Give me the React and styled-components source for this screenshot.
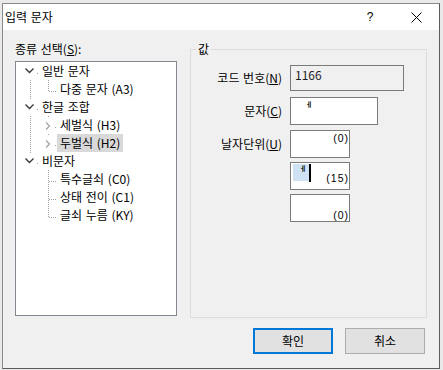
import React from 'react';
import styled, { createGlobalStyle } from 'styled-components';

const Global = createGlobalStyle`
  html, body { margin: 0; padding: 0; background: #e9e9e9; }
  body {
    font-family: "Noto Sans CJK KR", "Noto Sans", sans-serif;
    font-size: 12px;
    color: #000;
    word-spacing: 1px;
  }
  * { box-sizing: border-box; }
`;

const Frame = styled.div`
  margin: 3px 0 0 2px;
  width: 438px;
  border: 1px solid #8a8a8a;
  border-right-color: #5c5c5c;
  border-bottom-color: #5c5c5c;
  background: #f0f0f0;
`;

const TitleBar = styled.div`
  height: 26px;
  background: #fff;
  display: flex;
  align-items: center;
  padding-left: 2px;
`;

const Title = styled.div`
  flex: 1;
  font-size: 12px;
  line-height: 16px;
`;

const CaptionButton = styled.div`
  width: 46px;
  height: 26px;
  display: flex;
  align-items: center;
  justify-content: center;
  font-size: 12px;
  font-family: "Liberation Sans", sans-serif;
`;

const Content = styled.div`
  padding: 11px 12px 14px 12px;
  display: flex;
  flex-direction: column;
`;

const Main = styled.div`
  display: flex;
  gap: 13px;
  align-items: flex-start;
`;

const LeftCol = styled.div`
  width: 162px;
  display: flex;
  flex-direction: column;
`;

const SectionLabel = styled.div`
  line-height: 16px;
  height: 16px;
  margin-bottom: 4px;
  white-space: nowrap;
`;

const Tree = styled.div`
  height: 255px;
  border: 1px solid #828790;
  background: #fff;
  display: flex;
  flex-direction: column;
`;

const TreeRow = styled.div`
  display: flex;
  height: 18px;
`;

const ItemLabel = styled.span`
  padding: 0 3px;
  line-height: 18px;
  height: 18px;
  white-space: nowrap;
  background: ${p => (p.$selected ? '#d9d9d9' : 'transparent')};
`;

const Group = styled.fieldset`
  width: 237px;
  height: 277px;
  margin: 0;
  padding: 0;
  min-width: 0;
  border: 1px solid #dcdcdc;
`;

const Legend = styled.legend`
  margin-left: 5px;
  padding: 0 2px;
  line-height: 16px;
  font-size: 12px;
`;

const FormGrid = styled.div`
  display: grid;
  grid-template-columns: 91px auto;
  column-gap: 8px;
  row-gap: 4px;
  margin-top: 8px;
  justify-content: start;
`;

const FieldLabel = styled.div`
  display: flex;
  align-items: center;
  justify-content: flex-end;
  line-height: 16px;
  white-space: pre;
  margin-top: ${p => p.$mt || 0}px;
`;

const Box = styled.div`
  width: ${p => p.$w}px;
  height: ${p => p.$h}px;
  margin-top: ${p => p.$mt || 0}px;
  border: 1px solid #7a7a7a;
  background: ${p => p.$bg || '#fff'};
  display: flex;
  justify-content: ${p => p.$justify || 'flex-start'};
  align-items: ${p => p.$align || 'flex-start'};
`;

const BoxText = styled.span`
  line-height: 16px;
  padding: 1px 0 0 4px;
  color: #1e1e1e;
`;

const JamoText = styled.span`
  line-height: 14px;
  padding: 2px 0 0 10px;
`;

const Mono = styled.span`
  font-family: "Liberation Sans", "DejaVu Sans", sans-serif;
  font-size: 10.5px;
  line-height: 12px;
  letter-spacing: 1px;
  color: #000;
  margin: ${p => p.$m || '0'};
`;

const Selection = styled.span`
  margin: 1px 0 0 2px;
  display: inline-flex;
  align-items: flex-start;
  justify-content: flex-end;
  padding-right: 3px;
  width: 16px;
  height: 17px;
  background: #cfe2f3;
  line-height: 13px;
`;

const Caret = styled.span`
  margin-top: 1px;
  width: 2px;
  height: 18px;
  background: #000;
`;

const Spacer = styled.span`
  flex: 1;
`;

const ButtonRow = styled.div`
  display: flex;
  justify-content: flex-end;
  gap: 12px;
  margin-top: 10px;
  padding-right: 2px;
`;

const Button = styled.button`
  width: 80px;
  height: 26px;
  margin: 0;
  padding: 0;
  font-family: "Noto Sans CJK KR", sans-serif;
  font-size: 12px;
  line-height: 16px;
  color: #000;
  background: #e1e1e1;
  border: ${p => (p.$primary ? '2px solid #0078d7' : '1px solid #adadad')};
`;

const U = styled.u`
  text-underline-offset: 1px;
`;

const rows = [
  { label: '일반 문자', level: 0, exp: 'down', first: true, last: false, anc: [] },
  { label: '다중 문자 (A3)', level: 1, last: true, anc: [true] },
  { label: '한글 조합', level: 0, exp: 'down', last: false, anc: [] },
  { label: '세벌식 (H3)', level: 1, exp: 'right', last: false, anc: [true] },
  { label: '두벌식 (H2)', level: 1, exp: 'right', last: true, anc: [true], selected: true },
  { label: '비문자', level: 0, exp: 'down', last: true, anc: [] },
  { label: '특수글쇠 (C0)', level: 1, last: false, anc: [false] },
  { label: '상태 전이 (C1)', level: 1, last: false, anc: [false] },
  { label: '글쇠 누름 (KY)', level: 1, last: true, anc: [false] },
];

function Gutter({ row }) {
  const w = row.level * 18 + 23;
  const cx = row.level * 18 + 14.5;
  const cy = 11.5;
  const dot = { stroke: '#a0a0a0', strokeWidth: 1, strokeDasharray: '1 1', shapeRendering: 'crispEdges' };
  return (
    <svg width={w} height={18} viewBox={`0 0 ${w} 18`} style={{ flex: 'none', display: 'block' }}>
      {row.anc.map((c, i) =>
        c ? <line key={i} x1={i * 18 + 14.5} y1={0} x2={i * 18 + 14.5} y2={18} {...dot} /> : null
      )}
      {!row.first && <line x1={cx} y1={0} x2={cx} y2={cy} {...dot} />}
      {!row.last && <line x1={cx} y1={cy} x2={cx} y2={18} {...dot} />}
      <line x1={cx} y1={cy} x2={w} y2={cy} {...dot} />
      {row.exp && <rect x={cx - 6.5} y={1} width={12} height={16} fill="#fff" />}
      {row.exp === 'down' && (
        <path d={`M${cx - 5} 6.5 L${cx - 1} 10.5 L${cx + 3} 6.5`} fill="none" stroke="#3a3a3a" strokeWidth="1.4" />
      )}
      {row.exp === 'right' && (
        <path d={`M${cx - 2.5} 6.5 L${cx + 1} 10 L${cx - 2.5} 13.5`} fill="none" stroke="#a6a6a6" strokeWidth="1.3" />
      )}
    </svg>
  );
}

export default function App() {
  return (
    <>
      <Global />
      <Frame>
        <TitleBar>
          <Title>입력 문자</Title>
          <CaptionButton>?</CaptionButton>
          <CaptionButton>
            <svg width="11" height="11" viewBox="0 0 11 11">
              <path d="M0.5 0.5 L10.5 10.5 M10.5 0.5 L0.5 10.5" stroke="#000" strokeWidth="1" fill="none" />
            </svg>
          </CaptionButton>
        </TitleBar>
        <Content>
          <Main>
            <LeftCol>
              <SectionLabel>
                종류 선택(<U>S</U>):
              </SectionLabel>
              <Tree>
                {rows.map((r, i) => (
                  <TreeRow key={i}>
                    <Gutter row={r} />
                    <ItemLabel $selected={r.selected}>{r.label}</ItemLabel>
                  </TreeRow>
                ))}
              </Tree>
            </LeftCol>
            <Group>
              <Legend>값</Legend>
              <FormGrid>
                <FieldLabel>
                  코드 번호(<U>N</U>)
                </FieldLabel>
                <Box $w={114} $h={26} $bg="#f0f0f0">
                  <BoxText>1166</BoxText>
                </Box>

                <FieldLabel $mt={2}>
                  문자(<U>C</U>)
                </FieldLabel>
                <Box $w={88} $h={28} $mt={2}>
                  <JamoText>{'\u1166'}</JamoText>
                </Box>

                <FieldLabel $mt={1}>
                  날자단위(<U>U</U>)
                </FieldLabel>
                <Box $w={60} $h={28} $mt={1} $justify="flex-end">
                  <Mono $m="1px 0 0 0">(0)</Mono>
                </Box>

                <span />
                <Box $w={60} $h={28}>
                  <Selection>{'\u1166'}</Selection>
                  <Caret />
                  <Spacer />
                  <Mono $m="9px 0 0 0">(15)</Mono>
                </Box>

                <span />
                <Box $w={60} $h={28} $justify="flex-end" $align="flex-end">
                  <Mono>(0)</Mono>
                </Box>
              </FormGrid>
            </Group>
          </Main>
          <ButtonRow>
            <Button $primary>확인</Button>
            <Button>취소</Button>
          </ButtonRow>
        </Content>
      </Frame>
    </>
  );
}
